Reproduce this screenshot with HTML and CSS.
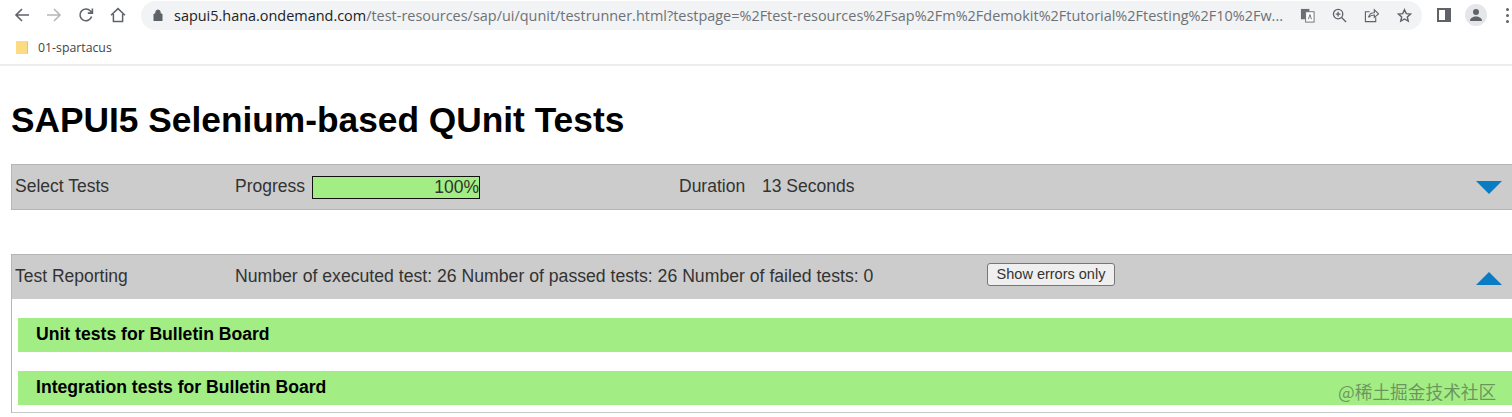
FILE: index.html
```html
<!DOCTYPE html>
<html lang="en">
<head>
<meta charset="UTF-8">
<title>SAPUI5 Selenium-based QUnit Tests</title>
<link rel="stylesheet" href="styles.css">
</head>
<body>

<!-- Browser chrome -->
<div class="toolbar">
    <svg class="nav-icon" viewBox="0 0 16 16"><path d="M15 8H2M8 2L2 8l6 6" fill="none" stroke="#5f6368" stroke-width="1.6"/></svg>
    <svg class="nav-icon" viewBox="0 0 16 16"><path d="M1 8h13M8 2l6 6-6 6" fill="none" stroke="#b4b6b9" stroke-width="1.6"/></svg>
    <svg class="nav-icon" viewBox="0 0 16 16"><path d="M13.6 9.5A5.9 5.9 0 1 1 12.4 4L14 5.6M14.4 1.5v4.6H9.8" fill="none" stroke="#5f6368" stroke-width="1.6"/></svg>
    <svg class="nav-icon" viewBox="0 0 16 16"><path d="M1 8.2L8 1.6l7 6.6M3.4 7v7.4h9.2V7" fill="none" stroke="#5f6368" stroke-width="1.5"/></svg>
    <div class="omnibox">
        <svg class="lock" viewBox="0 0 10 12"><path d="M1 5h8v7H1zM2.8 5V3.2a2.2 2.2 0 0 1 4.4 0V5" fill="#5f6368" stroke="#5f6368"/></svg>
        <span class="url"><span class="host">sapui5.hana.ondemand.com</span>/test-resources/sap/ui/qunit/testrunner.html?testpage=%2Ftest-resources%2Fsap%2Fm%2Fdemokit%2Ftutorial%2Ftesting%2F10%2Fw...</span>
        <div class="omni-icons">
            <svg class="omni-icon" viewBox="0 0 16 16"><rect x="1" y="1" width="9" height="11" fill="#6b6f73"/><rect x="6" y="4" width="9" height="11" fill="#fff" stroke="#6b6f73"/><path d="M9 12l1.6-5 1.6 5" fill="none" stroke="#6b6f73"/></svg>
            <svg class="omni-icon" viewBox="0 0 16 16"><circle cx="6.5" cy="6.5" r="5" fill="none" stroke="#5f6368" stroke-width="1.4"/><path d="M10.2 10.2L15 15M4 6.5h5M6.5 4v5" fill="none" stroke="#5f6368" stroke-width="1.4"/></svg>
            <svg class="omni-icon" viewBox="0 0 16 16"><path d="M6 4H1.5v10.5h11V10M5 10c.5-3.500 3-5 6-5V2l4.500 4.200L11 10V7.500C8.500 7.500 6.500 8 5 10z" fill="none" stroke="#5f6368" stroke-width="1.2"/></svg>
            <svg class="omni-icon" viewBox="0 0 16 16"><path d="M8 1.800l1.900 4.200 4.500.5-3.400 3 1 4.500L8 11.700 4 14l1-4.500-3.400-3 4.500-.5z" fill="none" stroke="#5f6368" stroke-width="1.500"/></svg>
        </div>
    </div>
    <svg class="side-icon" viewBox="0 0 14 14"><rect x="1" y="1" width="12" height="12" fill="#fff" stroke="#5f6368" stroke-width="2"/><rect x="8" y="1" width="5" height="12" fill="#5f6368"/></svg>
    <div class="avatar">
        <svg viewBox="0 0 14 14" width="14" height="14"><circle cx="7" cy="4" r="3" fill="#5f6368"/><path d="M1 13c0-3 3-4.500 6-4.500s6 1.500 6 4.500z" fill="#5f6368"/></svg>
    </div>
    <div class="kebab"><i></i><i></i><i></i></div>
</div>

<div class="bookmarks">
    <span class="folder"></span>
    <span class="bookmark-name">01-spartacus</span>
</div>

<!-- Test runner page -->
<div class="page">
    <h1>SAPUI5 Selenium-based QUnit Tests</h1>

    <div class="panel-head first">
        <span class="col-title">Select Tests</span>
        <span class="progress-label">Progress</span>
        <div class="progress"><span>100%</span></div>
        <span class="duration-label">Duration</span>
        <span>13 Seconds</span>
        <span class="arrow down"></span>
    </div>

    <div class="panel-head second">
        <span class="col-title">Test Reporting</span>
        <span class="counts">Number of executed test: 26 Number of passed tests: 26 Number of failed tests: 0</span>
        <button class="btn">Show errors only</button>
        <span class="arrow up"></span>
    </div>

    <div class="panel-body">
        <div class="module">Unit tests for Bulletin Board</div>
        <div class="module">Integration tests for Bulletin Board</div>
    </div>
</div>

<div class="watermark">@稀土掘金技术社区</div>

</body>
</html>
```

FILE: styles.css
```css
html, body {
    margin: 0;
    height: 417px;
    overflow: hidden;
}
body {
    position: relative;
    font-family: "Liberation Sans", Arial, sans-serif;
    background-color: #fff;
    color: #333;
}
.toolbar {
    display: flex;
    align-items: center;
    height: 30px;
    background: #fff;
}
.nav-icon {
    width: 16px;
    height: 16px;
    margin-left: 14px;
    margin-right: 2px;
    flex: none;
}
.omnibox {
    display: flex;
    align-items: center;
    width: 1281px;
    height: 29px;
    margin-left: 13px;
    padding-left: 12px;
    box-sizing: border-box;
    border-radius: 15px;
    background: #f1f3f4;
    flex: none;
}
.lock {
    width: 10px;
    height: 12px;
    flex: none;
}
.url {
    margin-left: 11px;
    width: 1111px;
    font-family: "Open Sans", sans-serif;
    font-size: 14.450px;
    color: #6e7276;
    white-space: nowrap;
    overflow: hidden;
}
.host {
    color: #202124;
}
.omni-icons {
    display: flex;
    gap: 17.200px;
    margin-left: 15px;
}
.omni-icon {
    width: 15px;
    height: 15px;
}
.side-icon {
    width: 14px;
    height: 14px;
    margin-left: 15px;
    flex: none;
}
.avatar {
    display: flex;
    align-items: center;
    justify-content: center;
    width: 22px;
    height: 22px;
    margin-left: 14px;
    border-radius: 50%;
    background: #e4e6ea;
    flex: none;
}
.kebab {
    display: flex;
    flex-direction: column;
    gap: 3px;
    margin-left: 19px;
    flex: none;
}
.kebab i {
    width: 3px;
    height: 3px;
    border-radius: 50%;
    background: #5f6368;
}
.bookmarks {
    display: flex;
    align-items: center;
    height: 34px;
    padding-left: 16px;
    border-bottom: 2px solid #ececec;
}
.folder {
    width: 11px;
    height: 13px;
    background: #fbdc80;
    border-right: 1px solid #e6c66a;
    border-radius: 1px;
}
.bookmark-name {
    margin-left: 10px;
    font-family: "Open Sans", sans-serif;
    font-size: 12.300px;
    color: #444;
}
.page {
    padding-left: 11px;
}
h1 {
    margin: 34px 0 0;
    font-size: 35.300px;
    line-height: 40px;
    font-weight: bold;
    color: #000;
}
.panel-head {
    display: flex;
    align-items: center;
    height: 46px;
    padding-left: 3px;
    box-sizing: border-box;
    background: #cccccc;
    border-top: 1px solid #b5b5b5;
    border-left: 1px solid #b5b5b5;
    border-bottom: 1px solid #b5b5b5;
    font-size: 17.500px;
    color: #333;
}
.panel-head.first {
    margin-top: 24px;
    padding-bottom: 2px;
}
.panel-head.second {
    height: 45px;
    margin-top: 44px;
    padding-bottom: 2px;
    border-bottom: none;
}
.col-title {
    width: 220px;
    flex: none;
}
.progress-label {
    width: 77px;
    flex: none;
}
.progress {
    width: 168px;
    height: 23px;
    margin-top: 2px;
    box-sizing: border-box;
    border: 1px solid #111;
    background: #a3ed85;
    text-align: right;
    line-height: 21px;
    flex: none;
}
.duration-label {
    margin-left: 199px;
    width: 83px;
    flex: none;
}
.counts {
    width: 752px;
    font-size: 17.650px;
    flex: none;
}
.btn {
    width: 128px;
    height: 23px;
    margin-bottom: 4px;
    padding: 0;
    box-sizing: border-box;
    border: 1px solid #767676;
    border-radius: 3px;
    background: #efefef;
    font-family: "Liberation Sans", Arial, sans-serif;
    font-size: 14.500px;
    color: #333;
    flex: none;
}
.arrow {
    margin-left: auto;
    margin-right: 10px;
    width: 0;
    height: 0;
    border-left: 13px solid transparent;
    border-right: 13px solid transparent;
}
.arrow.down {
    border-top: 13px solid #0a7cc4;
    margin-top: 3px;
}
.arrow.up {
    border-bottom: 13px solid #0a7cc4;
    margin-top: 5px;
}
.panel-body {
    height: 114px;
    box-sizing: border-box;
    padding: 19px 0 0 6px;
    border-left: 1px solid #b5b5b5;
    border-bottom: 1px solid #c8c8c8;
}
.module {
    height: 34px;
    line-height: 33px;
    margin-bottom: 19px;
    padding-left: 18px;
    background: #a3ed85;
    font-size: 17.600px;
    font-weight: bold;
    color: #000;
}
.watermark {
    position: absolute;
    left: 1338px;
    top: 380px;
    font-family: "Noto Sans CJK SC", sans-serif;
    font-size: 17.700px;
    line-height: 22px;
    color: rgba(90, 120, 80, 0.75);
}
```
